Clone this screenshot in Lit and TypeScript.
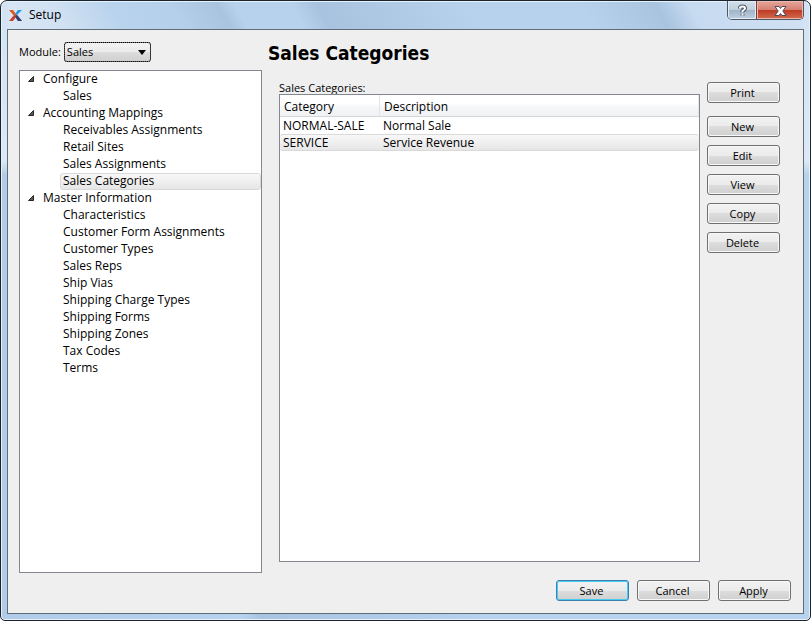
import { LitElement, html, css, svg } from "lit";
import { customElement, property, state } from "lit/decorators.js";
import { classMap } from "lit/directives/class-map.js";

interface Group {
  name: string;
  items: string[];
}

const GROUPS: Group[] = [
  { name: "Configure", items: ["Sales"] },
  {
    name: "Accounting Mappings",
    items: ["Receivables Assignments", "Retail Sites", "Sales Assignments", "Sales Categories"],
  },
  {
    name: "Master Information",
    items: [
      "Characteristics",
      "Customer Form Assignments",
      "Customer Types",
      "Sales Reps",
      "Ship Vias",
      "Shipping Charge Types",
      "Shipping Forms",
      "Shipping Zones",
      "Tax Codes",
      "Terms",
    ],
  },
];

const ROWS = [
  { category: "NORMAL-SALE", description: "Normal Sale" },
  { category: "SERVICE", description: "Service Revenue" },
];

const expander = svg`<path d="M5.5 0.5V5.5H0.5Z" fill="#595959" stroke="#262626"/>`;

@customElement("push-button")
class PushButton extends LitElement {
  @property() label = "";
  @property({ type: Boolean }) primary = false;

  static styles = css`
    :host {
      display: block;
      width: 73px;
    }
    .button {
      display: block;
      box-sizing: border-box;
      width: 100%;
      height: 21px;
      padding: 0 2px 0 0;
      border: 1px solid #707070;
      border-radius: 3px;
      background: linear-gradient(#f2f2f2, #ebebeb 50%, #dddddd 50%, #cfcfcf);
      box-shadow: inset 0 0 0 1px #f8f8f8;
      color: #000;
      font: 11px/17px "Open Sans", "Noto Sans", sans-serif;
    }
    .primary {
      border-color: #3c7fb1;
      box-shadow: inset 0 0 0 1px #48cbf2;
    }
  `;

  render() {
    return html`<button class=${classMap({ button: true, primary: this.primary })} type="button">${this.label}</button>`;
  }
}

@customElement("module-tree")
class ModuleTree extends LitElement {
  @state() selected = "Sales Categories";

  static styles = css`
    :host {
      display: block;
      box-sizing: border-box;
      border: 1px solid #828790;
      background: #fff;
    }
    .list {
      list-style: none;
      margin: 0;
      padding: 0;
    }
    .row {
      display: flex;
      align-items: center;
      box-sizing: border-box;
      height: 17px;
      margin: 0;
      padding: 0 2px 2px;
      border: 1px solid transparent;
      border-radius: 3px;
      background: none;
      color: #000;
      font: 12px/15px "Open Sans", "Noto Sans", sans-serif;
      white-space: nowrap;
    }
    .group {
      width: 100%;
      gap: 9px;
      padding-left: 7px;
    }
    .leaf {
      width: calc(100% - 40px);
      margin-left: 40px;
    }
    .selected {
      border-color: #d9d9d9;
      background: linear-gradient(#f8f8f8, #e6e6e6);
    }
    .expander {
      width: 6px;
      height: 6px;
    }
  `;

  render() {
    return html`<ul class="list">
      ${GROUPS.map(
        (group) => html`<li>
          <button class="row group" type="button" aria-expanded="true">
            <svg class="expander" viewBox="0 0 6 6" aria-hidden="true">${expander}</svg>${group.name}
          </button>
          <ul class="list">
            ${group.items.map(
              (item) => html`<li>
                <button
                  class=${classMap({ row: true, leaf: true, selected: item === this.selected })}
                  type="button"
                  @click=${() => (this.selected = item)}
                >${item}</button>
              </li>`
            )}
          </ul>
        </li>`
      )}
    </ul>`;
  }
}

@customElement("category-table")
class CategoryTable extends LitElement {
  @state() selected = "SERVICE";

  static styles = css`
    :host {
      display: block;
      box-sizing: border-box;
      border: 1px solid #828790;
      background: #fff;
    }
    .table {
      width: 100%;
      table-layout: fixed;
      border-collapse: separate;
      border-spacing: 0;
      font: 12px/15px "Open Sans", "Noto Sans", sans-serif;
      color: #000;
    }
    .head {
      box-sizing: border-box;
      height: 22px;
      padding: 2px 4px 0;
      border-right: 1px solid #e3e5e8;
      border-bottom: 1px solid #d5d5d5;
      background: linear-gradient(#fff 40%, #f5f6f8 60%, #f1f2f4);
      font-weight: 400;
      text-align: left;
    }
    .narrow {
      width: 100px;
    }
    .cell {
      box-sizing: border-box;
      height: 17px;
      padding: 0 3px;
      border: 1px solid transparent;
      border-width: 1px 0;
    }
    .selected .cell {
      border-color: #d9d9d9;
      background: linear-gradient(#f8f8f8, #e6e6e6);
    }
    .selected .cell:first-child {
      border-radius: 3px 0 0 3px;
    }
    .selected .cell:last-child {
      border-radius: 0 3px 3px 0;
    }
  `;

  render() {
    return html`<table class="table" aria-label="Sales Categories">
      <thead>
        <tr>
          <th class="head narrow" scope="col">Category</th>
          <th class="head" scope="col">Description</th>
        </tr>
      </thead>
      <tbody>
        ${ROWS.map(
          (row) => html`<tr
            class=${classMap({ selected: row.category === this.selected })}
            @click=${() => (this.selected = row.category)}
          >
            <td class="cell">${row.category}</td>
            <td class="cell">${row.description}</td>
          </tr>`
        )}
      </tbody>
    </table>`;
  }
}

@customElement("app-root")
class AppRoot extends LitElement {
  static styles = css`
    :host {
      display: block;
      background: #fff;
      color: #000;
      font: 11px/14px "Open Sans", "Noto Sans", sans-serif;
    }
    .window {
      display: flex;
      flex-direction: column;
      box-sizing: border-box;
      min-height: 100vh;
      padding: 0 6px 6px;
      border: 1px solid #1d232c;
      border-radius: 7px 7px 5px 5px;
      box-shadow: inset 0 0 0 1px #e6f2fb;
      background:
        linear-gradient(#d3e3f4, #dce8f5 160px, transparent 174px) left / 7px 100% no-repeat,
        linear-gradient(#d3e3f4, #dce8f5 160px, transparent 174px) right / 7px 100% no-repeat,
        linear-gradient(60deg, #dbe8f5 0, #d0e1f2 8%, #b9d3ed 15%, #b5d0eb 22%, #a9c4df 28%, #b7d2ed 30%,
          #b7d2ed 37%, #a8c3df 40%, #b0cbe6 50%, #b7d2ed 58%, #b7d2ed 72%, #a8c4df 81%, #c6daf0 85%, #d2e2f3 100%) top / 100% 29px no-repeat,
        linear-gradient(90deg, #b1cce8, #b7d2ed 30%, #a8c4e0 32%, #b7d2ed 60%, #b7d2ed);
    }
    .titlebar {
      display: flex;
      align-items: flex-start;
      justify-content: space-between;
      height: 28px;
    }
    .caption {
      display: flex;
      align-items: center;
      gap: 7px;
      height: 28px;
      margin: 0;
      padding-left: 2px;
      font: 12px/16px "Open Sans", "Noto Sans", sans-serif;
    }
    .logo {
      width: 13px;
      height: 11px;
    }
    .controls {
      display: flex;
      box-sizing: border-box;
      height: 19px;
      border: 1px solid #4d5662;
      border-top: 0;
      border-radius: 0 0 5px 5px;
      overflow: hidden;
    }
    .control {
      display: flex;
      align-items: center;
      justify-content: center;
      width: 28px;
      height: 18px;
      padding: 0;
      border: 0;
      background: linear-gradient(#d3dfea, #c1cfdd 48%, #9fb3c7 50%, #bfd1e3);
      box-shadow: inset 0 0 0 1px #e2edf7;
    }
    .close {
      width: 47px;
      border-left: 1px solid #7d3a35;
      background: linear-gradient(#e5a79c, #d58072 48%, #bd3a22 50%, #d26b50);
      box-shadow: inset 0 0 0 1px #eab8ad;
    }
    .glyph {
      display: block;
      width: 13px;
      height: 13px;
    }
    .client {
      display: flex;
      flex: 1;
      flex-direction: column;
      border: 1px solid #606c76;
      background: #efefef;
      padding: 12px 12px 12px 11px;
    }
    .body {
      display: flex;
      flex: 1;
      gap: 6px;
    }
    .side {
      display: flex;
      flex: 0 0 243px;
      flex-direction: column;
      gap: 8px;
    }
    .module {
      display: flex;
      align-items: center;
      gap: 3px;
      height: 20px;
    }
    .picker {
      display: grid;
      align-items: center;
      width: 87px;
    }
    .select {
      grid-area: 1 / 1;
      appearance: none;
      box-sizing: border-box;
      width: 100%;
      height: 20px;
      padding: 0 18px 0 2px;
      border: 1px solid #707070;
      border-radius: 3px;
      outline: 1px dotted #000;
      outline-offset: -1px;
      background: linear-gradient(#f2f2f2, #ebebeb 50%, #dddddd 50%, #cfcfcf);
      color: #000;
      font: inherit;
    }
    .arrow {
      grid-area: 1 / 1;
      justify-self: end;
      width: 8px;
      height: 5px;
      margin-right: 5px;
      pointer-events: none;
    }
    .tree {
      flex: 1;
    }
    .main {
      display: flex;
      flex: 1;
      flex-direction: column;
      min-width: 0;
    }
    .title {
      margin: 0;
      font: 700 19px/22px "DejaVu Sans Condensed", "DejaVu Sans", sans-serif;
    }
    .panel {
      display: flex;
      flex: 1;
      gap: 7px;
      padding: 17px 11px 11px;
    }
    .list {
      display: flex;
      flex: 1;
      flex-direction: column;
      min-width: 0;
    }
    .caption-text {
      height: 13px;
      margin: 0;
    }
    .grid {
      flex: 1;
    }
    .actions {
      display: flex;
      flex-direction: column;
      gap: 8px;
      padding-top: 1px;
    }
    .print {
      margin-bottom: 5px;
    }
    .footer {
      display: flex;
      justify-content: flex-end;
      gap: 8px;
      padding-top: 7px;
    }
  `;

  render() {
    return html`<div class="window">
      <header class="titlebar">
        <p class="caption">
          <svg class="logo" viewBox="0 0 13 11" aria-hidden="true">
            <path d="M0 0H4L7 4 9 6 13 11H9L6 7Z" fill="#dd5a25" />
            <path d="M0 11H4L7 7 5 5Z" fill="#c8432b" />
            <path d="M9 0H13L8 5 6 4Z" fill="#1f9be0" />
            <path d="M6 6L8 5 13 11H9Z" fill="#27407f" />
          </svg>
          Setup
        </p>
        <div class="controls">
          <button class="control" type="button" aria-label="Help">
            <svg class="glyph" viewBox="0 0 13 13" fill="none" aria-hidden="true">
              <path d="M4 4.5V4Q4 2.5 6.5 2.5T9 4.5Q9 5.5 6.5 7V8.5M6.5 10V11.5" stroke="#4a5566" stroke-width="4" />
              <path d="M4 4.5V4Q4 2.5 6.5 2.5T9 4.5Q9 5.5 6.5 7V8.5M6.5 10V11.5" stroke="#fff" stroke-width="2" />
            </svg>
          </button>
          <button class="control close" type="button" aria-label="Close">
            <svg class="glyph" viewBox="0 0 13 13" aria-hidden="true">
              <path
                d="M1 2.5H5L6.5 4.5 8 2.5H12L8.8 7 12 11.5H8L6.5 9.5 5 11.5H1L4.2 7Z"
                fill="#fff" stroke="#4f4a5a" stroke-linejoin="round"
              />
            </svg>
          </button>
        </div>
      </header>
      <main class="client">
        <div class="body">
          <div class="side">
            <div class="module">
              <label for="module">Module:</label>
              <div class="picker">
                <select class="select" id="module">
                  <option>Sales</option>
                </select>
                <svg class="arrow" viewBox="0 0 8 5" aria-hidden="true"><path d="M0 0H8L4 5Z" /></svg>
              </div>
            </div>
            <module-tree class="tree"></module-tree>
          </div>
          <section class="main">
            <h1 class="title">Sales Categories</h1>
            <div class="panel">
              <div class="list">
                <p class="caption-text">Sales Categories:</p>
                <category-table class="grid"></category-table>
              </div>
              <div class="actions">
                <push-button class="print" label="Print"></push-button>
                ${["New", "Edit", "View", "Copy", "Delete"].map(
                  (label) => html`<push-button label=${label}></push-button>`
                )}
              </div>
            </div>
          </section>
        </div>
        <footer class="footer">
          <push-button label="Save" primary></push-button>
          <push-button label="Cancel"></push-button>
          <push-button label="Apply"></push-button>
        </footer>
      </main>
    </div>`;
  }
}
